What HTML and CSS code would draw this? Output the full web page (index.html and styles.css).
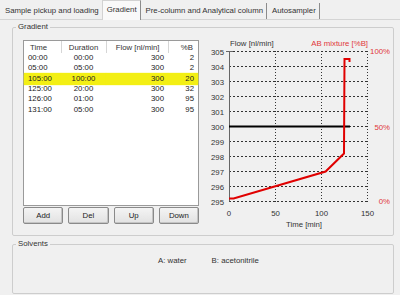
FILE: index.html
```html
<!DOCTYPE html>
<html lang="en">
<head>
    <meta charset="UTF-8">
    <title>Gradient</title>
    <link rel="stylesheet" href="styles.css">
</head>
<body>
    <div class="tabs">
        <div class="tab">Sample pickup and loading</div>
        <div class="tab active">Gradient</div>
        <div class="tab">Pre-column and Analytical column</div>
        <div class="tab">Autosampler</div>
    </div>
    <div class="page">
        <fieldset class="group gradient">
            <legend>Gradient</legend>
            <div class="editor">
                <div class="list">
                    <table>
                        <thead>
                            <tr>
                                <th class="c-time">Time</th>
                                <th class="c-dur">Duration</th>
                                <th class="c-flow">Flow [nl/min]</th>
                                <th class="c-b">%B</th>
                            </tr>
                        </thead>
                        <tbody>
                            <tr><td class="c-time">00:00</td><td class="c-dur">00:00</td><td class="c-flow">300</td><td class="c-b">2</td></tr>
                            <tr><td class="c-time">05:00</td><td class="c-dur">05:00</td><td class="c-flow">300</td><td class="c-b">2</td></tr>
                            <tr class="marked"><td class="c-time">105:00</td><td class="c-dur">100:00</td><td class="c-flow">300</td><td class="c-b">20</td></tr>
                            <tr><td class="c-time">125:00</td><td class="c-dur">20:00</td><td class="c-flow">300</td><td class="c-b">32</td></tr>
                            <tr><td class="c-time">126:00</td><td class="c-dur">01:00</td><td class="c-flow">300</td><td class="c-b">95</td></tr>
                            <tr><td class="c-time">131:00</td><td class="c-dur">05:00</td><td class="c-flow">300</td><td class="c-b">95</td></tr>
                        </tbody>
                    </table>
                </div>
                <div class="buttons">
                    <button>Add</button>
                    <button>Del</button>
                    <button>Up</button>
                    <button>Down</button>
                </div>
            </div>
            <svg class="chart" width="192" height="196" viewBox="199 36 192 196">
                <!-- grid -->
                <g class="grid-h">
                    <line x1="229" y1="51.5" x2="368" y2="51.5"/>
                    <line x1="229" y1="66.5" x2="368" y2="66.5"/>
                    <line x1="229" y1="81.5" x2="368" y2="81.5"/>
                    <line x1="229" y1="96.5" x2="368" y2="96.5"/>
                    <line x1="229" y1="111.5" x2="368" y2="111.5"/>
                    <line x1="229" y1="126.5" x2="368" y2="126.5"/>
                    <line x1="229" y1="141.5" x2="368" y2="141.5"/>
                    <line x1="229" y1="156.5" x2="368" y2="156.5"/>
                    <line x1="229" y1="171.5" x2="368" y2="171.5"/>
                    <line x1="229" y1="186.5" x2="368" y2="186.5"/>
                    <line x1="229" y1="201.5" x2="368" y2="201.5"/>
                </g>
                <g class="grid-v">
                    <line x1="275.5" y1="51" x2="275.5" y2="202"/>
                    <line x1="321.5" y1="51" x2="321.5" y2="202"/>
                    <line x1="367.5" y1="51" x2="367.5" y2="202"/>
                </g>
                <line class="axis" x1="229.5" y1="51.5" x2="229.5" y2="201.5"/>
                <line class="axis" x1="226" y1="51.5" x2="233" y2="51.5"/>

                <!-- series -->
                <line class="flow" x1="229" y1="126.5" x2="350" y2="126.5"/>
                <polyline class="mix" points="229,198.5 233.6,198.5 325.6,171.5 344,153.5 344.5,59 349.5,59 349.5,62"/>

                <!-- labels -->
                <text x="230" y="46">Flow [nl/min]</text>
                <text class="red" x="368" y="46" text-anchor="end">AB mixture [%B]</text>

                <g text-anchor="end">
                    <text x="224" y="54.5">305</text>
                    <text x="224" y="69.5">304</text>
                    <text x="224" y="84.5">303</text>
                    <text x="224" y="99.5">302</text>
                    <text x="224" y="114.5">301</text>
                    <text x="224" y="129.5">300</text>
                    <text x="224" y="144.5">299</text>
                    <text x="224" y="159.5">298</text>
                    <text x="224" y="174.5">297</text>
                    <text x="224" y="189.5">296</text>
                    <text x="224" y="204.5">295</text>
                </g>
                <g text-anchor="middle">
                    <text x="229" y="216">0</text>
                    <text x="275.5" y="216">50</text>
                    <text x="321.5" y="216">100</text>
                    <text x="367.5" y="216">150</text>
                    <text x="304" y="227">Time [min]</text>
                </g>
                <g class="red" text-anchor="end">
                    <text x="390" y="54">100%</text>
                    <text x="390" y="130">50%</text>
                    <text x="390" y="204">0%</text>
                </g>
            </svg>
        </fieldset>
        <fieldset class="group solvents">
            <legend>Solvents</legend>
            <div class="solvent-names">
                <span>A: water</span>
                <span>B: acetonitrile</span>
            </div>
        </fieldset>
    </div>
</body>
</html>
```

FILE: styles.css
```css
body {
    margin: 0;
    width: 400px;
    height: 295px;
    overflow: hidden;
    background: #f0f0f0;
    font-family: "Liberation Sans", Arial, sans-serif;
    font-size: 7.8px;
    color: #222;
}
.tabs {
    display: flex;
    align-items: flex-end;
    height: 19px;
}
.tab {
    height: 16px;
    line-height: 16px;
    padding: 0 3px 0 5px;
    box-sizing: border-box;
    border-right: 1px solid #8c8c8c;
    white-space: nowrap;
    color: #333;
}
.tab:first-child {
    border-right: none;
}
.tab.active {
    height: 20px;
    line-height: 17px;
    margin-bottom: -1px;
    padding: 0 3px 0 4px;
    background: #f9f9f9;
    border-left: 1px solid #d2d2d2;
    border-top: 1px solid #d2d2d2;
    position: relative;
}
.page {
    border-top: 1px solid #d4d4d4;
    padding: 2px 0 0 12px;
}
.group {
    margin: 0;
    width: 382px;
    box-sizing: border-box;
    border: 1px solid #cdcdcd;
    border-radius: 2px;
    padding: 4px 2px 0 10px;
}
.group legend {
    padding: 0 2px;
    margin-left: -7px;
    line-height: 10px;
    color: #333;
}
.gradient {
    height: 214px;
    display: flex;
    align-items: flex-start;
}
.editor {
    width: 176px;
    padding-top: 4px;
}
.list {
    height: 166px;
    box-sizing: border-box;
    border: 1px solid #9a9a9a;
    background: #fff;
}
table {
    width: 100%;
    border-collapse: collapse;
    table-layout: fixed;
}
th, td {
    box-sizing: border-box;
    padding: 0;
}
th {
    height: 12px;
    font-weight: normal;
    color: #333;
    border-right: 1px solid #d6d6d6;
}
td {
    height: 10.3px;
    line-height: 10px;
    color: #222;
}
.c-time { width: 37px; text-align: left; padding-left: 4px; }
th.c-time { padding-left: 6px; }
.c-dur { width: 45px; text-align: center; }
.c-flow { width: 62px; text-align: right; padding-right: 4px; }
th.c-flow { padding-right: 8px; }
.c-b { text-align: right; padding-right: 4px; }
th.c-b { border-right: none; padding-right: 5px; }
.marked td {
    background: #f3ef14;
    box-shadow: 0 1px 1px #f3ef14, 0 -1px 1px #f3ef14;
}
.buttons {
    display: flex;
    gap: 5px;
    margin-top: 1px;
}
.buttons button {
    flex: 1;
    height: 17px;
    padding: 0;
    font: inherit;
    color: #222;
    background: linear-gradient(#f4f4f4, #e2e2e2);
    border: 1px solid #8a8a8a;
    border-radius: 2px;
    box-shadow: inset -1px -1px 0 #c4c4c4;
}
.chart {
    display: block;
    overflow: visible;
}
.chart text {
    font-family: "Liberation Sans", Arial, sans-serif;
    font-size: 7.8px;
    fill: #333;
}
.chart .red text,
.chart text.red {
    fill: #e03838;
}
.grid-h line {
    stroke: #333;
    stroke-width: 1;
    stroke-dasharray: 2 2;
}
.grid-v line {
    stroke: #333;
    stroke-width: 1;
    stroke-dasharray: 1 2;
}
.axis {
    stroke: #666;
    stroke-width: 1;
}
.flow {
    stroke: #000;
    stroke-width: 2;
}
.mix {
    fill: none;
    stroke: #e00000;
    stroke-width: 2;
    stroke-linejoin: miter;
}
.solvents {
    margin-top: 3px;
    height: 55px;
}
.solvent-names {
    display: flex;
    gap: 25px;
    padding: 3px 0 0 135px;
    line-height: 10px;
    color: #333;
}
```
